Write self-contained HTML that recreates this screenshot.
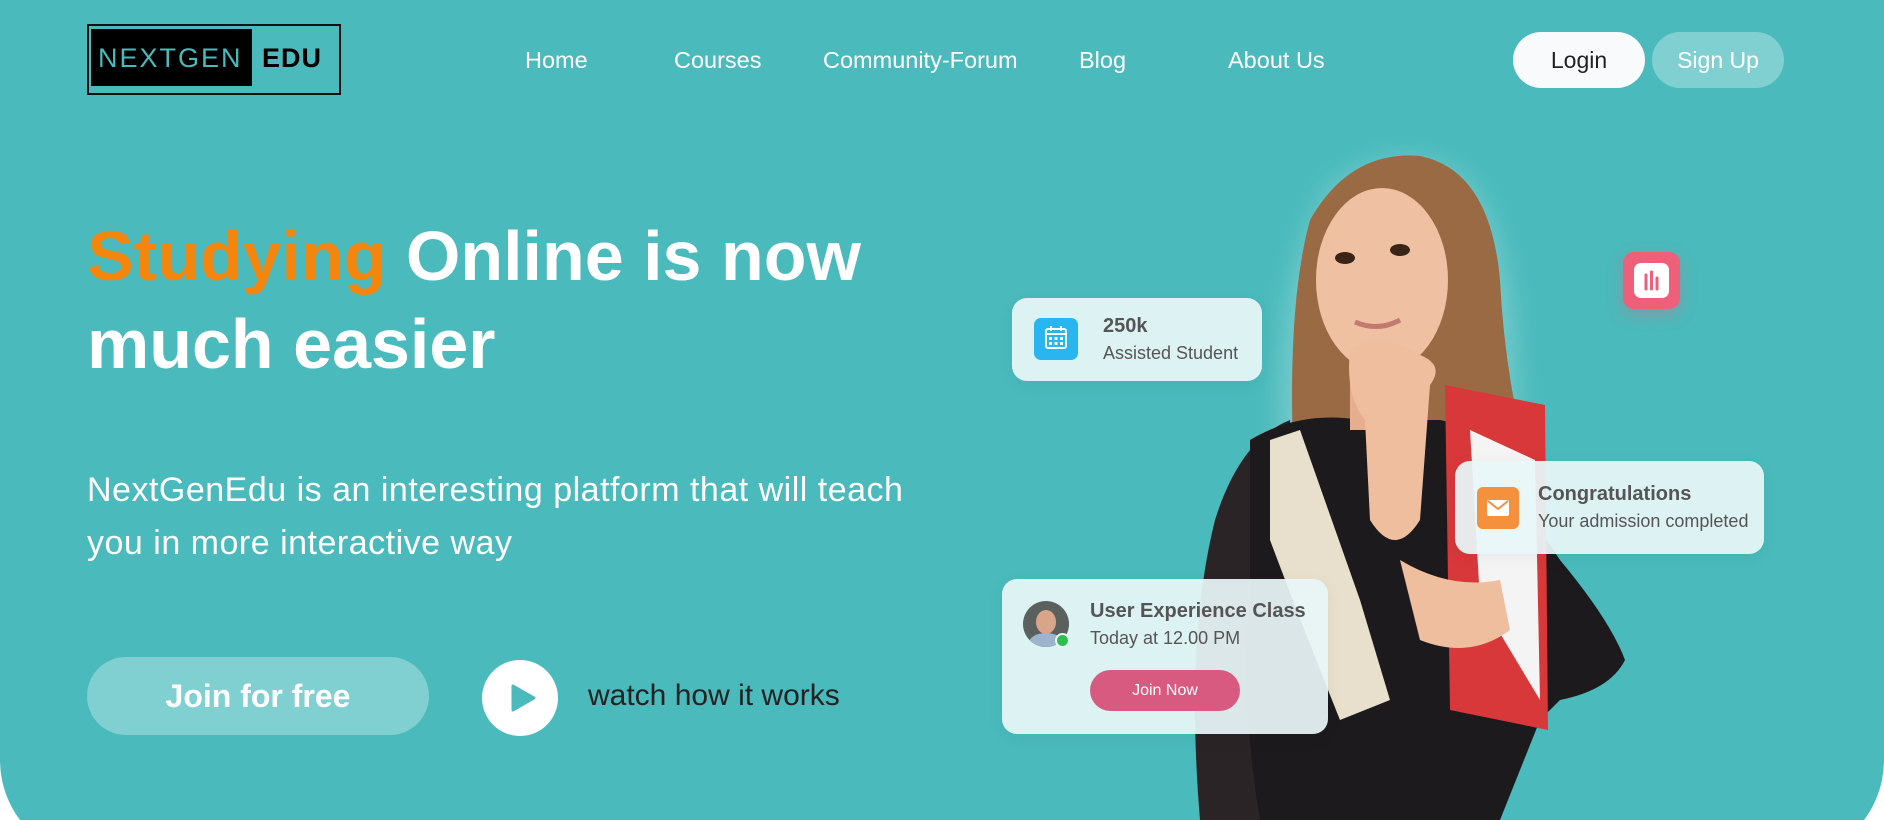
<!DOCTYPE html>
<html><head><meta charset="utf-8"><style>
*{margin:0;padding:0;box-sizing:border-box}
html,body{width:1884px;height:820px;overflow:hidden;background:#fff}
body{font-family:"Liberation Sans",sans-serif;position:relative}
.wrap{position:absolute;left:0;top:0;width:1884px;height:820px;overflow:hidden}
.hero{position:absolute;left:0;top:0;width:1884px;height:860px;background:#4ABABC;border-radius:0 0 100px 100px;overflow:hidden}
.abs{position:absolute}
.nav a{position:absolute;top:47px;color:#fff;font-size:23.5px;text-decoration:none;white-space:nowrap}
.card{position:absolute;background:rgba(232,246,247,0.93);border-radius:15px;box-shadow:0 4px 18px rgba(0,0,0,0.05)}
.ct{position:absolute;color:#555;white-space:nowrap}
</style></head><body>
<div class="wrap">
<div class="hero">
  <div class="abs" style="left:87px;top:24px;width:254px;height:71px;border:2px solid #111"></div>
  <div class="abs" style="left:91px;top:29px;width:161px;height:57px;background:#000"></div>
  <div class="abs" style="left:98px;top:43px;font-size:27px;color:#4ABABC;letter-spacing:2px">NEXTGEN</div>
  <div class="abs" style="left:262px;top:43px;font-size:27px;color:#000;font-weight:bold;letter-spacing:1px">EDU</div>
  <div class="nav">
    <a style="left:525px">Home</a>
    <a style="left:674px">Courses</a>
    <a style="left:823px">Community-Forum</a>
    <a style="left:1079px">Blog</a>
    <a style="left:1228px">About Us</a>
  </div>
  <div class="abs" style="left:1513px;top:32px;width:132px;height:56px;border-radius:28px;background:#F8FAFC;color:#222;font-size:23px;text-align:center;line-height:56px">Login</div>
  <div class="abs" style="left:1652px;top:32px;width:132px;height:56px;border-radius:28px;background:#80D0D2;color:#fff;font-size:23px;text-align:center;line-height:56px">Sign Up</div>

  <div class="abs" style="left:87px;top:212px;font-size:70px;font-weight:bold;color:#fff;line-height:88px;white-space:nowrap"><span style="color:#F5860D">Studying</span> Online is now<br>much easier</div>
  <div class="abs" style="left:87px;top:464px;font-size:34px;letter-spacing:0.5px;color:#fff;line-height:53px;white-space:nowrap">NextGenEdu is an interesting platform that will teach<br>you in more interactive way</div>

  <div class="abs" style="left:87px;top:657px;width:342px;height:78px;border-radius:39px;background:#80D0D2;color:#fff;font-size:32px;font-weight:bold;text-align:center;line-height:78px">Join for free</div>
  <div class="abs" style="left:482px;top:660px;width:76px;height:76px;border-radius:50%;background:#fff"></div>
  <svg class="abs" style="left:482px;top:660px" width="76" height="76"><path d="M31 26 L52 38 L31 50 Z" fill="#4ABABC" stroke="#4ABABC" stroke-width="3" stroke-linejoin="round"/></svg>
  <div class="abs" style="left:588px;top:679px;font-size:30px;color:#222">watch how it works</div>

  <svg class="abs" style="left:0;top:0" width="1884" height="860">
    <defs><filter id="b" x="-20%" y="-20%" width="140%" height="140%"><feGaussianBlur stdDeviation="14"/></filter></defs>
    <path d="M1290 560 Q1260 300 1330 190 Q1390 140 1460 175 Q1520 240 1515 420 L1540 560 Z" fill="#fff" opacity="0.25" filter="url(#b)"/>
    <path d="M1215 520 Q1240 440 1290 420 L1300 820 L1200 820 Q1185 640 1215 520 Z" fill="#2a2426"/>
    <path d="M1300 560 Q1280 330 1310 220 Q1350 150 1420 156 Q1490 170 1500 280 Q1505 380 1530 470 L1470 470 L1320 570 Z" fill="#9a6a45"/>
    <path d="M1250 440 Q1300 410 1360 420 L1440 420 Q1500 430 1520 500 L1560 560 Q1610 620 1625 660 Q1610 690 1560 700 L1540 720 L1500 820 L1260 820 Q1240 700 1250 600 Z" fill="#1c1a1c"/>
    <path d="M1270 440 L1300 430 L1360 600 L1390 700 L1340 720 Q1300 620 1270 540 Z" fill="#e8e0cc"/>
    <path d="M1350 360 L1410 360 L1420 430 L1350 430 Z" fill="#e6ae8e"/>
    <ellipse cx="1382" cy="280" rx="66" ry="92" fill="#f0c0a2"/>
    <ellipse cx="1345" cy="258" rx="10" ry="6" fill="#3a2418"/>
    <ellipse cx="1400" cy="250" rx="10" ry="6" fill="#3a2418"/>
    <path d="M1355 322 Q1378 332 1400 320" stroke="#c07a70" stroke-width="5" fill="none"/>
    <path d="M1350 350 Q1380 330 1420 355 Q1445 365 1430 385 L1420 520 Q1395 560 1370 520 L1365 420 Q1345 395 1350 350 Z" fill="#efbe9f"/>
    <path d="M1445 385 L1545 405 L1548 730 L1450 710 Z" fill="#d8383a"/>
    <path d="M1470 430 L1535 460 L1540 700 L1480 600 Z" fill="#f4f4f4"/>
    <path d="M1400 560 Q1450 590 1500 580 L1510 630 Q1470 660 1420 640 Z" fill="#efbe9f"/>
  </svg>

  <div class="card" style="left:1012px;top:298px;width:250px;height:83px"></div>
  <div class="abs" style="left:1034px;top:318px;width:44px;height:42px;border-radius:7px;background:#29B6F0"></div>
  <svg class="abs" style="left:1034px;top:318px" width="44" height="42"><rect x="12" y="11" width="20" height="19" rx="2" fill="none" stroke="#fff" stroke-width="2"/><path d="M12 16 H32 M17 8 V13 M27 8 V13" stroke="#fff" stroke-width="2"/><g fill="#fff"><rect x="15" y="19" width="3" height="3"/><rect x="20.5" y="19" width="3" height="3"/><rect x="26" y="19" width="3" height="3"/><rect x="15" y="24" width="3" height="3"/><rect x="20.5" y="24" width="3" height="3"/><rect x="26" y="24" width="3" height="3"/></g></svg>
  <div class="ct" style="left:1103px;top:315px;font-size:20px;font-weight:bold">250k</div>
  <div class="ct" style="left:1103px;top:343px;font-size:18px">Assisted Student</div>

  <div class="abs" style="left:1623px;top:252px;width:57px;height:57px;border-radius:11px;background:#EE5F7A;box-shadow:0 6px 16px rgba(238,95,122,0.35)"></div>
  <div class="abs" style="left:1634px;top:263px;width:35px;height:35px;border-radius:7px;background:#fff"></div>
  <svg class="abs" style="left:1634px;top:263px" width="35" height="35"><path d="M12 12 V26 M17.5 9 V26 M23 15 V26" stroke="#EE5F7A" stroke-width="3" stroke-linecap="round"/></svg>

  <div class="card" style="left:1455px;top:461px;width:309px;height:93px"></div>
  <div class="abs" style="left:1477px;top:487px;width:42px;height:42px;border-radius:6px;background:#F5903D"></div>
  <svg class="abs" style="left:1477px;top:487px" width="42" height="42"><rect x="10" y="13" width="22" height="16" rx="2" fill="#fff"/><path d="M11 14 L21 22 L31 14" stroke="#F5903D" stroke-width="2" fill="none"/></svg>
  <div class="ct" style="left:1538px;top:483px;font-size:20px;font-weight:bold">Congratulations</div>
  <div class="ct" style="left:1538px;top:511px;font-size:18px">Your admission completed</div>

  <div class="card" style="left:1002px;top:579px;width:326px;height:155px"></div>
  <div class="abs" style="left:1023px;top:601px;width:46px;height:46px;border-radius:50%;background:#59605e;overflow:hidden"><div style="position:absolute;left:13px;top:9px;width:20px;height:24px;border-radius:50%;background:#d9a58a"></div><div style="position:absolute;left:6px;top:32px;width:34px;height:20px;border-radius:50%;background:#9cb4cc"></div></div>
  <div class="abs" style="left:1055px;top:633px;width:15px;height:15px;border-radius:50%;background:#2EBE4E;border:2px solid #e8f6f7"></div>
  <div class="ct" style="left:1090px;top:600px;font-size:20px;font-weight:bold">User Experience Class</div>
  <div class="ct" style="left:1090px;top:628px;font-size:18px">Today at 12.00 PM</div>
  <div class="abs" style="left:1090px;top:670px;width:150px;height:41px;border-radius:21px;background:#D95A80;color:#fff;font-size:16px;text-align:center;line-height:41px">Join Now</div>
</div>
</div>
</body></html>
